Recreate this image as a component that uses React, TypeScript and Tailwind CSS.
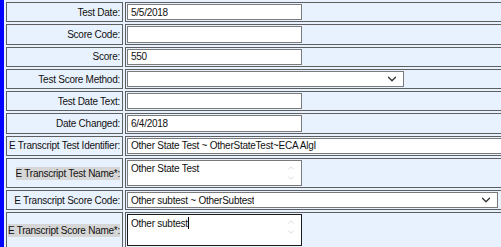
import { ChevronDown, ChevronUp } from 'lucide-react'

type Row = {
  label: string
  kind: 'input' | 'select' | 'textarea'
  value?: string
  width?: string
  required?: boolean
  focused?: boolean
}

const rows: Row[] = [
  { label: 'Test Date:', kind: 'input', value: '5/5/2018' },
  { label: 'Score Code:', kind: 'input' },
  { label: 'Score:', kind: 'input', value: '550' },
  { label: 'Test Score Method:', kind: 'select', width: 'w-[277px]' },
  { label: 'Test Date Text:', kind: 'input' },
  { label: 'Date Changed:', kind: 'input', value: '6/4/2018' },
  { label: 'E Transcript Test Identifier:', kind: 'input', value: 'Other State Test ~ OtherStateTest~ECA AlgI', width: 'w-[420px]' },
  { label: 'E Transcript Test Name*:', kind: 'textarea', value: 'Other State Test', required: true },
  { label: 'E Transcript Score Code:', kind: 'select', value: 'Other subtest ~ OtherSubtest', width: 'w-[371px]' },
  { label: 'E Transcript Score Name*:', kind: 'textarea', value: 'Other subtest', required: true, focused: true },
]

function Field({ row }: { row: Row }) {
  if (row.kind === 'select') {
    return (
      <div className={`${row.width} h-[16.3px] border border-[#7a7a7a] bg-white flex items-center justify-between pl-[3px] pr-[4px]`}>
        <span className="truncate">{row.value}</span>
        <ChevronDown className="w-[14px] h-[14px] text-[#333] shrink-0" strokeWidth={2.2} />
      </div>
    )
  }

  if (row.kind === 'textarea') {
    return (
      <div
        className={`w-[175px] ${row.focused ? 'h-[32px] border-[#1a1a1a]' : 'h-[26px] border-[#7a7a7a]'} border bg-white flex justify-between pl-[3px] pr-[4px] pt-[2px]`}
      >
        <span className="leading-[12px]">
          {row.value}
          {row.focused && <span className="inline-block w-px h-[12px] bg-black align-[-2px]" />}
        </span>
        <div className="flex flex-col items-center text-[#c4c4c4]">
          <ChevronUp className="w-[12px] h-[10px]" strokeWidth={1.5} />
          <ChevronDown className="w-[12px] h-[10px]" strokeWidth={1.5} />
        </div>
      </div>
    )
  }

  return (
    <input
      readOnly
      value={row.value ?? ''}
      className={`${row.width ?? 'w-[175px]'} h-[16.3px] border border-[#7a7a7a] bg-white px-[3px] outline-none text-[10px] tracking-[-0.25px] text-[#111] block`}
      style={{ fontFamily: 'inherit' }}
    />
  )
}

export default function App() {
  return (
    <div
      className="w-[501px] h-[247px] overflow-hidden bg-[#e8f2fe] flex text-[10px] tracking-[-0.25px] text-[#111]"
      style={{ fontFamily: '"Liberation Sans", Arial, sans-serif' }}
    >
      <div className="w-[4px] shrink-0 bg-[#0000ff]" />
      <table className="border-separate border-spacing-[2px] bg-[#e8f2fe] shrink-0 self-start table-fixed w-[545px]">
        <tbody>
          {rows.map((row) => (
            <tr key={row.label}>
              <td className="w-[117px] border border-[#5f5f5f] bg-[#e8f2fe] text-right align-middle pr-[2px] pl-0 whitespace-nowrap">
                {row.required ? (
                  <span className="bg-[#d6d6d6] py-px">{row.label}</span>
                ) : (
                  row.label
                )}
              </td>
              <td className="w-[424px] border border-r-0 border-[#5f5f5f] bg-[#e8f2fe] p-px align-middle">
                <Field row={row} />
              </td>
            </tr>
          ))}
        </tbody>
      </table>
    </div>
  )
}
